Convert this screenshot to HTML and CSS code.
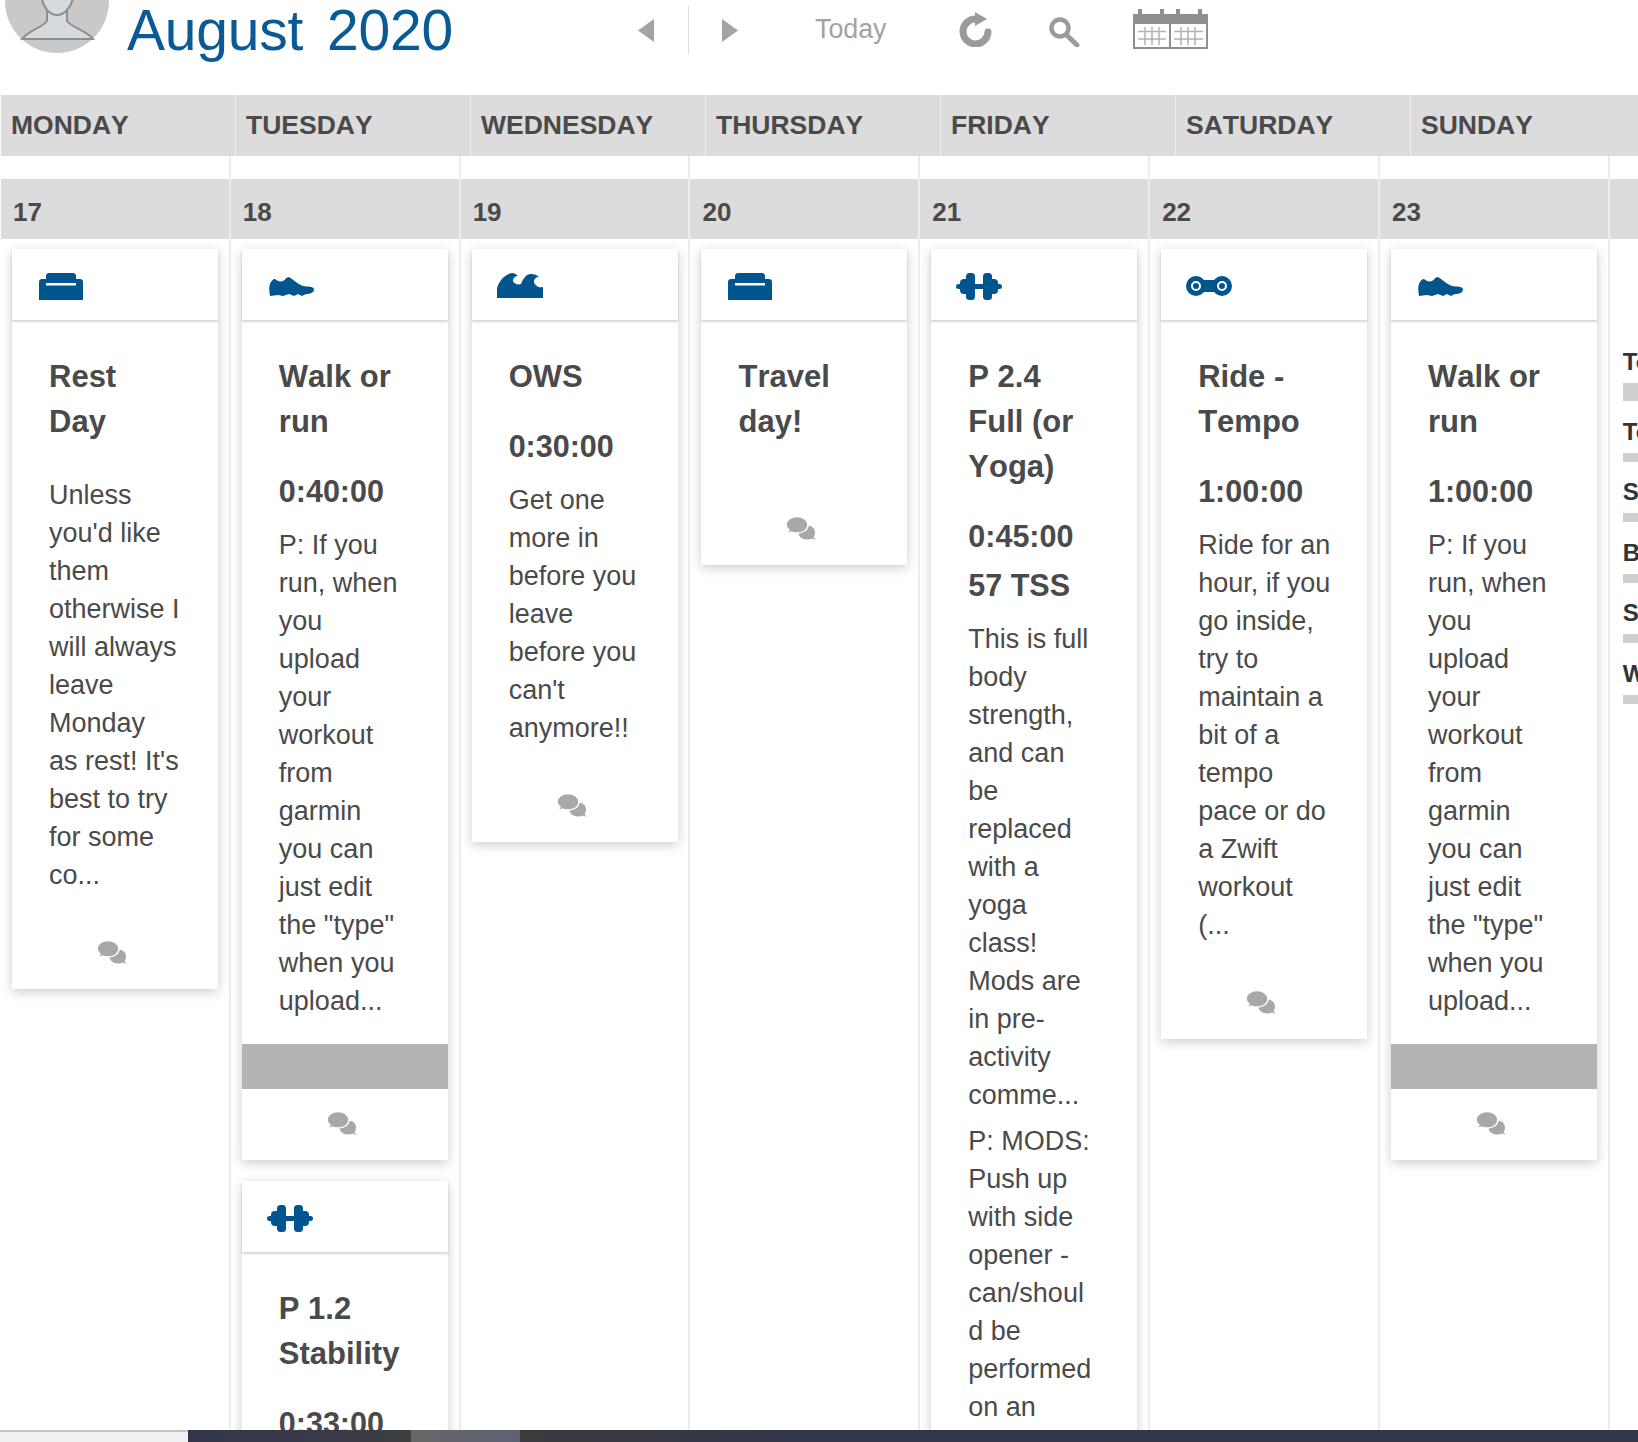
FILE: index.html
```html
<!DOCTYPE html>
<html lang="en">
<head>
<meta charset="utf-8">
<title>August 2020</title>
<link rel="stylesheet" href="styles.css">
</head>
<body>
<svg class="defs" width="0" height="0" aria-hidden="true">
  <defs>
    <symbol id="i-sofa" viewBox="0 0 44 27"><path d="M10 0h24c2 0 3 1.500 3 3v3h4c2 0 3 1 3 3v18H0V9c0-2 1-3 3-3h4V3c0-1.500 1-3 3-3z"/><rect x="7" y="10" width="30" height="2.500" fill="#fff"/></symbol>
    <symbol id="i-shoe" viewBox="0 0 45 21"><path d="M1 8C2 5 4 3 6 3L9 5C12 6 16 5 17 2L20 1C24 3 28 8 34 10C39 11 44 10 45 13C45 17 41 18 37 18L33 20L29 18L25 20L20 18L14 20L9 19L1 20C0 14 0 11 1 8Z"/></symbol>
    <symbol id="i-wave" viewBox="0 0 46 25"><path d="M0 25V15C2 8 8 1 15 0C17 0 19 1 21 3C18 3 16 5 16 8C17 11 21 12 24 11C26 6 29 1 34 1C37 1 40 2 42 4C39 4 37 6 37 9C38 13 42 15 46 14V25Z"/></symbol>
    <symbol id="i-bell" viewBox="0 0 46 27"><rect x="10" width="9" height="27" rx="3.500"/><rect x="27" width="9" height="27" rx="3.500"/><rect x="4" y="6" width="10" height="15" rx="4"/><rect x="32" y="6" width="10" height="15" rx="4"/><rect y="11" width="46" height="5" rx="2.500"/></symbol>
    <symbol id="i-chain" viewBox="0 0 46 20"><circle cx="10" cy="10" r="10"/><circle cx="36" cy="10" r="10"/><rect x="10" y="4" width="26" height="12"/><circle cx="10" cy="10" r="4" fill="none" stroke="#fff" stroke-width="2"/><circle cx="36" cy="10" r="4" fill="none" stroke="#fff" stroke-width="2"/></symbol>
    <symbol id="i-talk" viewBox="0 0 30 24"><path d="M30 24l-4-1.500c-1.500.8-3 1.100-5 1.100-5 0-8.500-3-8.500-7s3.500-7 8.500-7 8 3 8 7c0 1.800-.5 3.400-1.500 4.600z"/><path d="M0 18l3-3.800C1.300 12.800 0 11 0 8.800 0 4 5 .5 11 .5s11 3.500 11 8.300-5 8.300-11 8.300c-2 0-3.800-.4-5.400-1z" stroke="#fff" stroke-width="1.500"/></symbol>
  </defs>
</svg>

<div class="page">
  <header class="topbar">
    <svg class="avatar" viewBox="0 0 104 54" aria-hidden="true">
      <circle cx="52" cy="1" r="52" fill="#c9c9c9"/>
      <path d="M17 39C24 30 37 28 42 21V8H62V21C67 28 81 30 88 39Z" fill="#d6dadc" stroke="#8e8e8e" stroke-width="2"/>
      <path d="M37 -2C38 8 45 15 52 15S66 8 68 -2Z" fill="#d6dadc" stroke="#8e8e8e" stroke-width="2"/>
    </svg>
    <h1 class="month">August 2020</h1>
    <svg class="arrow arrow-prev" viewBox="0 0 16 23" aria-hidden="true"><polygon points="16,0 16,23 0,11.500"/></svg>
    <span class="divider"></span>
    <svg class="arrow arrow-next" viewBox="0 0 16 23" aria-hidden="true"><polygon points="0,0 0,23 16,11.500"/></svg>
    <span class="today">Today</span>
    <svg class="refresh" viewBox="0 0 33 35" aria-hidden="true"><path d="M29 20A12.500 12.500 0 1 1 17 7" fill="none" stroke="#9b9b9b" stroke-width="7" stroke-linecap="round"/><polygon points="16,0 28,7 16,14" fill="#9b9b9b"/></svg>
    <svg class="search" viewBox="0 0 31 30" aria-hidden="true"><circle cx="11" cy="11" r="8.500" fill="none" stroke="#9b9b9b" stroke-width="4.500"/><line x1="17.500" y1="18" x2="28" y2="28" stroke="#9b9b9b" stroke-width="5" stroke-linecap="round"/></svg>
    <svg class="calendar" viewBox="0 0 75 40" aria-hidden="true">
      <rect x="5" width="4" height="6" fill="#8f8f8f"/><rect x="27" width="4" height="6" fill="#8f8f8f"/><rect x="43" width="4" height="6" fill="#8f8f8f"/><rect x="65" width="4" height="6" fill="#8f8f8f"/>
      <rect y="5" width="75" height="35" fill="#8f8f8f"/>
      <rect x="2" y="15" width="34" height="23" fill="#fff"/><rect x="38" y="15" width="35" height="23" fill="#fff"/>
      <path d="M5 22.500H33M5 30H33M12 18V36M19 18V36M26 18V36M41 22.500H70M41 30H70M48 18V36M55 18V36M62 18V36" stroke="#b3b3b3" stroke-width="1.500" fill="none"/>
    </svg>
  </header>

  <div class="weekdays">
    <div class="weekday">Monday</div>
    <div class="weekday">Tuesday</div>
    <div class="weekday">Wednesday</div>
    <div class="weekday">Thursday</div>
    <div class="weekday">Friday</div>
    <div class="weekday">Saturday</div>
    <div class="weekday">Sunday</div>
  </div>

  <main class="week">
    <section class="day">
      <div class="date">17</div>
      <article class="card">
        <div class="card-head"><svg class="icon icon-sofa"><use href="#i-sofa"/></svg></div>
        <div class="card-body">
          <h2 class="title">Rest Day</h2>
          <p class="desc">Unless you'd like them otherwise I will always leave Monday as rest! It's best to try for some co...</p>
        </div>
        <div class="card-foot"><svg class="talk"><use href="#i-talk"/></svg></div>
      </article>
    </section>

    <section class="day">
      <div class="date">18</div>
      <article class="card">
        <div class="card-head"><svg class="icon icon-shoe"><use href="#i-shoe"/></svg></div>
        <div class="card-body">
          <h2 class="title">Walk or run</h2>
          <div class="stat">0:40:00</div>
          <p class="desc">P: If you run, when you upload your workout from garmin you can just edit the "type" when you upload...</p>
        </div>
        <div class="status-bar"></div>
        <div class="card-foot"><svg class="talk"><use href="#i-talk"/></svg></div>
      </article>
      <article class="card">
        <div class="card-head"><svg class="icon icon-bell"><use href="#i-bell"/></svg></div>
        <div class="card-body">
          <h2 class="title">P 1.2 Stability</h2>
          <div class="stat">0:33:00</div>
        </div>
      </article>
    </section>

    <section class="day">
      <div class="date">19</div>
      <article class="card">
        <div class="card-head"><svg class="icon icon-wave"><use href="#i-wave"/></svg></div>
        <div class="card-body">
          <h2 class="title">OWS</h2>
          <div class="stat">0:30:00</div>
          <p class="desc">Get one more in before you leave before you can't anymore!!</p>
        </div>
        <div class="card-foot"><svg class="talk"><use href="#i-talk"/></svg></div>
      </article>
    </section>

    <section class="day">
      <div class="date">20</div>
      <article class="card">
        <div class="card-head"><svg class="icon icon-sofa"><use href="#i-sofa"/></svg></div>
        <div class="card-body">
          <h2 class="title">Travel day!</h2>
        </div>
        <div class="card-foot"><svg class="talk"><use href="#i-talk"/></svg></div>
      </article>
    </section>

    <section class="day">
      <div class="date">21</div>
      <article class="card">
        <div class="card-head"><svg class="icon icon-bell"><use href="#i-bell"/></svg></div>
        <div class="card-body">
          <h2 class="title">P 2.4 Full (or Yoga)</h2>
          <div class="stat">0:45:00</div>
          <div class="stat">57 TSS</div>
          <p class="desc">This is full body strength, and can be replaced with a yoga class! Mods are in pre-activity comme...</p>
          <p class="desc">P: MODS: Push up with side opener - can/shoul<br>d be performed on an</p>
        </div>
      </article>
    </section>

    <section class="day">
      <div class="date">22</div>
      <article class="card">
        <div class="card-head"><svg class="icon icon-chain"><use href="#i-chain"/></svg></div>
        <div class="card-body">
          <h2 class="title">Ride - Tempo</h2>
          <div class="stat">1:00:00</div>
          <p class="desc desc-wide">Ride for an hour, if you go inside, try to maintain a bit of a tempo pace or do a Zwift workout (...</p>
        </div>
        <div class="card-foot"><svg class="talk"><use href="#i-talk"/></svg></div>
      </article>
    </section>

    <section class="day">
      <div class="date">23</div>
      <article class="card">
        <div class="card-head"><svg class="icon icon-shoe"><use href="#i-shoe"/></svg></div>
        <div class="card-body">
          <h2 class="title">Walk or run</h2>
          <div class="stat">1:00:00</div>
          <p class="desc">P: If you run, when you upload your workout from garmin you can just edit the "type" when you upload...</p>
        </div>
        <div class="status-bar"></div>
        <div class="card-foot"><svg class="talk"><use href="#i-talk"/></svg></div>
      </article>
    </section>

    <aside class="summary">
      <div class="date date-blank"></div>
      <ul class="totals">
        <li class="total total-main"><span class="total-name">Total</span><span class="total-bar"></span></li>
        <li class="total"><span class="total-name">Total</span><span class="total-bar"></span></li>
        <li class="total"><span class="total-name">Swim</span><span class="total-bar"></span></li>
        <li class="total"><span class="total-name">Bike</span><span class="total-bar"></span></li>
        <li class="total"><span class="total-name">Strength</span><span class="total-bar"></span></li>
        <li class="total"><span class="total-name">Walk</span><span class="total-bar"></span></li>
      </ul>
    </aside>
  </main>
</div>

<div class="taskbar">
  <span class="task-start"></span>
  <span class="task-gap"></span>
  <span class="task-active"></span>
  <span class="task-rest"></span>
</div>
</body>
</html>
```

FILE: styles.css
```css
* { box-sizing: border-box; }

html, body {
  margin: 0;
  height: 100%;
  background: #fff;
}

body {
  font-family: "Liberation Sans", Arial, sans-serif;
  color: #4a4a4a;
  overflow: hidden;
}

.defs { position: absolute; }

.page {
  height: 1442px;
  overflow: hidden;
}

/* top bar */
.topbar {
  display: flex;
  align-items: center;
  height: 60px;
  margin-bottom: 35px;
  padding-left: 5px;
}

.avatar {
  flex: none;
  width: 104px;
  height: 54px;
  align-self: flex-start;
}

.month {
  margin: 0 0 0 18px;
  width: 353px;
  flex: none;
  color: #0a5a95;
  font-size: 57px;
  font-weight: 400;
  line-height: 60px;
  word-spacing: 8px;
  white-space: nowrap;
  letter-spacing: -.2px;
}

.arrow { flex: none; width: 16px; height: 23px; fill: #a3a3a3; }
.arrow-prev { margin-left: 158px; }
.arrow-next { margin-left: 33px; }

.divider {
  flex: none;
  width: 1px;
  height: 48px;
  margin-left: 34px;
  background: #dedede;
}

.today {
  flex: none;
  margin-left: 77px;
  margin-top: -2px;
  color: #a3a3a3;
  font-size: 26.8px;
  line-height: 32px;
}

.refresh { flex: none; width: 33px; height: 35px; margin: -2px 0 0 72px; }
.search { flex: none; width: 31px; height: 30px; margin: 4px 0 0 57px; }
.calendar { flex: none; width: 75px; height: 40px; margin: -2px 0 0 53px; }

/* weekday strip */
.weekdays {
  display: grid;
  grid-template-columns: repeat(6, 235px) 1fr;
  height: 61px;
  margin-left: 1px;
  background: #dcdcdc;
}

.weekday {
  padding-left: 10px;
  border-right: 1px solid #efefef;
  font-size: 26.5px;
  font-kerning: none;
  font-weight: 700;
  line-height: 60px;
  text-transform: uppercase;
}

.weekday:last-child { border-right: 0; }

/* week grid */
.week {
  display: grid;
  grid-template-columns: repeat(7, 229.83px) 1fr;
  margin-left: 1px;
  height: 1286px;
}

.day {
  display: flex;
  flex-direction: column;
  gap: 21px;
  padding-top: 23px;
  border-right: 2px solid #ececec;
  align-items: stretch;
}

.date {
  height: 60px;
  margin-bottom: -11px;
  padding-left: 12px;
  background: #dcdcdc;
  font-size: 26px;
  font-kerning: none;
  font-weight: 700;
  line-height: 66px;
}

/* cards */
.card {
  flex: none;
  width: 206px;
  margin-left: 11px;
  background: #fff;
  box-shadow: 0 3px 11px rgba(0, 0, 0, .2);
}

.card-head {
  display: flex;
  align-items: center;
  height: 71px;
  margin-bottom: 2px;
  padding: 4px 0 0 25px;
  box-shadow: 0 2px 2px rgba(0, 0, 0, .16);
}

.icon { flex: none; fill: #00558f; }
.icon-sofa { width: 44px; height: 27px; margin-left: 2px; }
.icon-shoe { width: 45px; height: 21px; margin: -1px 0 0 2px; }
.icon-wave { width: 46px; height: 25px; margin-top: -2px; }
.icon-bell { width: 46px; height: 27px; margin-top: -1px; }
.icon-chain { width: 46px; height: 20px; margin-top: -1px; }

.card-body { padding: 32px 38px 24px 37px; }

.title {
  max-width: 130px;
  margin: 0 0 23px;
  font-size: 31px;
  font-kerning: none;
  font-weight: 700;
  line-height: 45px;
}

.title:last-child { margin-bottom: 26px; }

.stat {
  font-size: 30.5px;
  font-weight: 700;
  line-height: 49px;
}

.stat + .desc { margin-top: 10px; }
.stat:last-child { margin-bottom: -26px; }

.desc {
  margin: 0;
  font-size: 27px;
  line-height: 38px;
  overflow-wrap: anywhere;
}

.desc + .desc { margin-top: 8px; }
.title + .desc { margin-top: 32px; }
.desc-wide { margin-right: -2px; }

.status-bar { height: 45px; background: #b3b3b3; }

.card-foot {
  display: flex;
  justify-content: center;
  height: 71px;
  padding: 22px 6px 0 0;
}

.talk { flex: none; width: 30px; height: 24px; fill: #a8a8a8; }

/* right-hand summary */
.summary { padding-top: 23px; }
.date-blank { margin-bottom: 0; }

.totals {
  margin: 108px 0 0;
  padding: 0 0 0 13px;
  list-style: none;
}

.total {
  display: flex;
  flex-direction: column;
  margin-bottom: 15.6px;
}

.total-name {
  color: #333;
  font-size: 24px;
  font-weight: 700;
  line-height: 30px;
  white-space: nowrap;
}

.total-bar {
  height: 9px;
  margin-top: 6px;
  width: 100px;
  background: #cfcfcf;
}

.total-main .total-bar { height: 18px; }

/* window taskbar sliver over the bottom edge */
.taskbar {
  position: fixed;
  left: 0;
  right: 0;
  bottom: 0;
  display: flex;
  height: 12px;
}

.task-start {
  flex: none;
  width: 188px;
  background: #f1f1f1;
  border-top: 2px solid #c4c4c4;
}

.task-gap {
  flex: none;
  width: 223px;
  background: linear-gradient(90deg, #33354b, #3a3b47 70%, #3d3f40);
}

.task-active {
  flex: none;
  width: 109px;
  background: linear-gradient(90deg, #666767, #5f6274);
}

.task-rest {
  flex: 1;
  background: linear-gradient(90deg, #3a3b3e, #33354a 25%, #34364a);
}
```
